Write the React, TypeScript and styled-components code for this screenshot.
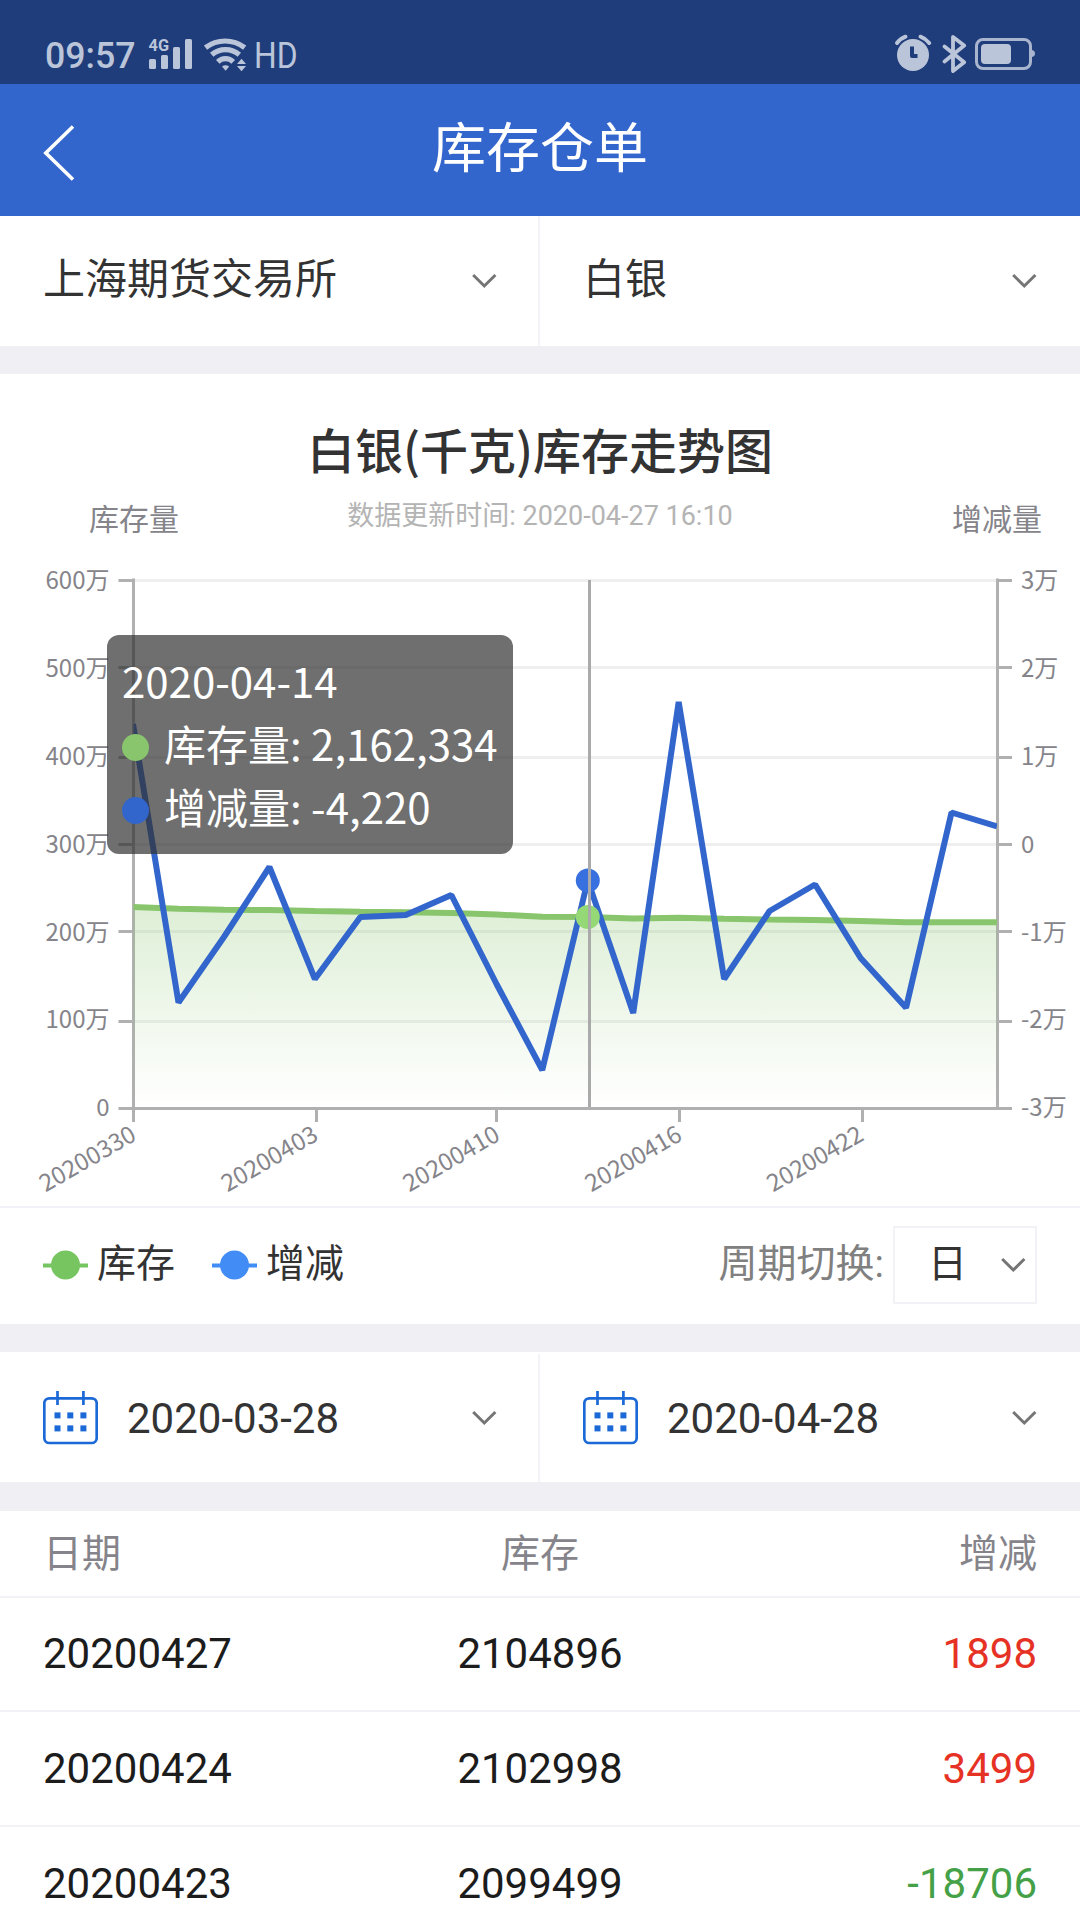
import React from "react";
import styled, { createGlobalStyle } from "styled-components";

const GlobalStyle = createGlobalStyle`
  html, body { margin: 0; padding: 0; background: #fff; }
  * { box-sizing: border-box; }
`;

const FONT = `Roboto, "Noto Sans CJK SC", sans-serif`;
const CJK = `"Noto Sans CJK SC", "Noto Sans", sans-serif`;

const Page = styled.div`
  width: 1080px;
  height: 1920px;
  overflow: hidden;
  display: flex;
  flex-direction: column;
  background: #f0eff4;
  font-family: ${FONT};
  color: #333;
  & > * { flex-shrink: 0; }
`;

const StatusBar = styled.div`
  height: 84px;
  padding: 26px 44px 0 45px;
  display: flex;
  justify-content: space-between;
  background: #1f3d7a;
  color: #bbc5da;
`;

const StatusGroup = styled.div`
  display: flex;
  height: 58px;
`;

const StatusText = styled.span<{ $squeeze: number; $weight: number }>`
  font-size: 37px;
  font-weight: ${(p) => p.$weight};
  line-height: 60px;
  white-space: nowrap;
  transform: scaleX(${(p) => p.$squeeze});
  transform-origin: left center;
`;

const ClockText = styled(StatusText)`
  width: 103px;
`;

const Header = styled.header`
  height: 132px;
  display: grid;
  grid-template-columns: 120px 1fr 120px;
  align-items: center;
  background: #3366cc;
  color: #fff;
`;

const BackButton = styled.button`
  display: flex;
  padding: 6px 0 0 43px;
  border: 0;
  background: none;
`;

const HeaderTitle = styled.h1`
  margin: 0;
  font-size: 54px;
  font-weight: 400;
  line-height: 80px;
  text-align: center;
`;

const PickerRow = styled.div`
  height: 130px;
  display: grid;
  grid-template-columns: 1fr 1fr;
  background: #fff;
`;

const Picker = styled.div<{ $divider?: boolean }>`
  display: flex;
  align-items: center;
  padding: 0 ${(p) => (p.$divider ? 41 : 43)}px 0 43px;
  border-right: ${(p) => (p.$divider ? "2px solid #f3f3f7" : "0")};
`;

const PickerLabel = styled.span<{ $lift?: number; $drop?: number; $indent?: number }>`
  flex: 1;
  padding: ${(p) => p.$drop ?? 0}px 0 ${(p) => p.$lift ?? 0}px ${(p) => p.$indent ?? 0}px;
  font-size: 42px;
  line-height: 60px;
`;

const ChartCard = styled.section`
  margin-top: 28px;
  height: 832px;
  position: relative;
  display: flex;
  flex-direction: column;
  background: #fff;
`;

const ChartTitle = styled.h2`
  margin: 0;
  padding-top: 42px;
  font-family: ${CJK};
  font-size: 48px;
  font-weight: 500;
  line-height: 64px;
  text-align: center;
`;

const ChartCaption = styled.div`
  display: grid;
  grid-template-columns: 1fr auto 1fr;
  height: 80px;
  padding: 13px 38px 0 89px;
`;

const AxisName = styled.span<{ $end?: boolean }>`
  padding-top: 7px;
  font-size: 30px;
  line-height: 40px;
  color: #85848a;
  text-align: ${(p) => (p.$end ? "right" : "left")};
`;

const UpdateTime = styled.span`
  margin-left: -51px;
  padding-top: 3px;
  font-size: 27px;
  line-height: 40px;
  color: #b4b4b4;
`;

const Plot = styled.svg`
  display: block;
  font-family: ${CJK};
  font-size: 24px;
`;

const Tooltip = styled.div`
  position: absolute;
  left: 107px;
  top: 261px;
  width: 406px;
  height: 219px;
  padding: 13px 15px;
  border-radius: 12px;
  background: rgba(50, 50, 50, 0.7);
  color: #fff;
  font-family: ${CJK};
  font-size: 42px;
  line-height: 63px;
  white-space: nowrap;
`;

const TooltipLine = styled.div`
  display: flex;
  align-items: center;
  height: 63px;
`;

const TooltipDot = styled.i<{ $color: string }>`
  width: 27px;
  height: 27px;
  margin: 9px 15px 0 0;
  border-radius: 50%;
  background: ${(p) => p.$color};
`;

const LegendBar = styled.div`
  height: 118px;
  padding: 0 43px 3px;
  display: flex;
  align-items: center;
  border-top: 2px solid #f2f2f8;
  background: #fff;
  font-size: 39px;
  line-height: 56px;
`;

const LegendItem = styled.div`
  display: flex;
  align-items: center;
  gap: 9px;
  margin-right: 37px;
`;

const LegendText = styled.span`
  padding-bottom: 1px;
`;

const PeriodLabel = styled.span`
  margin-left: auto;
  padding: 0 9px 1px 0;
  color: #808080;
`;

const PeriodSelect = styled.div`
  width: 144px;
  height: 78px;
  padding: 0 9px 0 33px;
  display: flex;
  align-items: center;
  justify-content: space-between;
  border: 2px solid #f1f1f6;
`;

const DateRow = styled(PickerRow)`
  margin-top: 28px;
  padding-top: 2px;
`;

const Table = styled.section`
  margin-top: 29px;
  background: #fff;
`;

const Row = styled.div<{ $head?: boolean }>`
  height: ${(p) => (p.$head ? 87 : 115)}px;
  padding: 0 43px;
  display: grid;
  grid-template-columns: 1fr 1fr 1fr;
  align-items: center;
  border-bottom: 2px solid #f2f2f7;
  font-size: ${(p) => (p.$head ? 39 : 42)}px;
  line-height: 60px;
  color: ${(p) => (p.$head ? "#85848a" : "#1c1c1c")};
  &:nth-child(2) { height: 114px; }
`;

const Cell = styled.span<{ $align?: string; $color?: string }>`
  text-align: ${(p) => p.$align ?? "left"};
  color: ${(p) => p.$color ?? "inherit"};
`;

const SignalIcon = () => (
  <svg width="106" height="58" viewBox="148 26 106 58" fill="#bbc5da">
    <text x="148.6" y="51" fontSize="16.5" fontWeight="700" fontFamily="Roboto, sans-serif" textLength="20.5" lengthAdjust="spacingAndGlyphs">4G</text>
    <rect x="149" y="59" width="7" height="10" rx="1.5" />
    <rect x="161" y="55" width="7" height="14" rx="1.5" />
    <rect x="173" y="47" width="7" height="22" rx="1.5" />
    <rect x="185" y="39" width="7" height="30" rx="1.5" />
    <g fill="none" stroke="#bbc5da" strokeWidth="5.2">
      <path d="M205.5 47.6A32.5 32.5 0 0 1 244.7 47.6" />
      <path d="M211.7 54.8A20.7 20.7 0 0 1 239.3 54.8" />
      <path d="M217.8 61.8A11 11 0 0 1 233.2 61.8" />
    </g>
    <path d="M222 66.5Q225.5 63.8 229.2 66.5L225.6 70.8Z" />
    <path d="M237 64L241.5 58.7L246 64ZM237 66L246 66L241.5 71.2Z" />
  </svg>
);

const DeviceIcons = () => (
  <svg width="142" height="58" viewBox="894 26 142 58">
    <circle cx="913" cy="55" r="16" fill="#bbc5da" />
    <path d="M912 46.5V56H917.5" fill="none" stroke="#1f3d7a" strokeWidth="4" strokeLinejoin="round" />
    <path d="M897 43Q900.5 38.5 905.5 36.7M920.5 36.7Q925.5 38.5 929.2 43" fill="none" stroke="#bbc5da" strokeWidth="4" strokeLinecap="round" />
    <path d="M944.5 46.5L964.2 62.2L953 71V37L964.2 45.5L944.5 61.5" fill="none" stroke="#bbc5da" strokeWidth="3.8" strokeLinejoin="round" strokeLinecap="round" />
    <rect x="976.5" y="39.5" width="54" height="29" rx="6.5" fill="none" stroke="#a9b5cf" strokeWidth="3" />
    <rect x="981" y="44" width="30" height="20" rx="4" fill="#bbc5da" />
    <path d="M1032 50Q1035 50.5 1035 53.5Q1035 56.5 1032 57Z" fill="#a9b5cf" />
  </svg>
);

const Chevron = () => (
  <svg width="26" height="16" viewBox="0 0 26 16">
    <path d="M2.2 2L13.3 13L24.4 2" fill="none" stroke="#757575" strokeWidth="3" />
  </svg>
);

const CalendarIcon = () => (
  <svg width="55" height="54" viewBox="43 1391 55 54" fill="none" stroke="#1b69d6" strokeWidth="2.7">
    <rect x="44.3" y="1398.3" width="52.4" height="44.7" rx="5" />
    <path d="M57.5 1391V1405M83.4 1391V1405" />
    <g fill="#1b69d6" stroke="none">
      {[1412.4, 1425.4].map((y) =>
        [54.5, 67.3, 80.4].map((x) => <rect key={`${x}-${y}`} x={x} y={y} width="6" height="6" />)
      )}
    </g>
  </svg>
);

const LegendMark = ({ color }: { color: string }) => (
  <svg width="45" height="30" viewBox="0 0 45 30" fill={color}>
    <rect y="13.5" width="45" height="4" />
    <circle cx="22.5" cy="15" r="14.5" />
  </svg>
);

/* Plot geometry, in page pixels */
const LEFT = 133;
const RIGHT = 997;
const STEP = (RIGHT - LEFT) / 19;
const gridY = [580.5, 667.5, 757.5, 844.5, 931.5, 1021.5, 1108.5];
const labelY = [589, 677, 765, 853, 941, 1028, 1116];
const leftLabels = ["600万", "500万", "400万", "300万", "200万", "100万", "0"];
const rightLabels = ["3万", "2万", "1万", "0", "-1万", "-2万", "-3万"];
const dateTicks = [
  { x: 133.5, label: "20200330" },
  { x: 316.5, label: "20200403" },
  { x: 496.5, label: "20200410" },
  { x: 679.5, label: "20200416" },
  { x: 862.5, label: "20200422" },
];
const changeY = [724, 1002.5, 937, 867, 979, 917, 915, 895, 984.5, 1070, 880.4, 1013, 702, 979, 911, 884.5, 958, 1007.8, 812.5, 826.5];
const stockY = [907, 908.7, 909.7, 910, 911, 911.7, 912.3, 913, 914.5, 916.7, 917, 918.5, 917.7, 918.7, 919.5, 920, 921, 922.3, 922.3, 922.3];
const toPath = (ys: number[]) => ys.map((y, i) => `${i ? "L" : "M"}${(LEFT + i * STEP).toFixed(2)} ${y}`).join("");

const TrendChart = () => (
  <Plot width="1080" height="646" viewBox="0 560 1080 646">
    <defs>
      <linearGradient id="area" x1="0" y1="907" x2="0" y2="1107" gradientUnits="userSpaceOnUse">
        <stop offset="0" stopColor="#88c56c" stopOpacity="0.28" />
        <stop offset="1" stopColor="#88c56c" stopOpacity="0" />
      </linearGradient>
      <clipPath id="plotClip">
        <rect x="133.5" y="574" width="863.5" height="540" />
      </clipPath>
    </defs>
    <g stroke="#efefef" strokeWidth="3">
      {gridY.map((y) => <path key={y} d={`M133.5 ${y}H997.5`} />)}
    </g>
    <g stroke="#b0b0b0" strokeWidth="3">
      <path d="M133.5 578.5V1110M997.5 578.5V1110M132 1108.5H999" />
      {gridY.map((y) => <path key={y} d={`M118.5 ${y}H133.5M997.5 ${y}H1012`} />)}
      {dateTicks.map((t) => <path key={t.x} d={`M${t.x} 1108.5V1122`} />)}
    </g>
    <g fill="#85848a">
      {leftLabels.map((t, i) => <text key={t} x="109.5" y={labelY[i]} textAnchor="end">{t}</text>)}
      {rightLabels.map((t, i) => <text key={t} x="1021" y={labelY[i]}>{t}</text>)}
      {dateTicks.map((t, i) => (
        <text key={t.label} textAnchor="end" transform={`translate(${133.3 + i * 181.9} 1131.5) rotate(-30)`} y="9">{t.label}</text>
      ))}
    </g>
    <g clipPath="url(#plotClip)" fill="none" strokeWidth="6" strokeLinejoin="bevel">
      <path d={`${toPath(stockY)}V1107H${LEFT}Z`} fill="url(#area)" />
      <path d={toPath(stockY)} stroke="#88c56c" />
      <path d={toPath(changeY)} stroke="#3366cc" />
    </g>
    <circle cx="587.8" cy="880.4" r="12" fill="#3870e0" />
    <circle cx="587.8" cy="917" r="12" fill="#95d876" />
    <path d="M589.5 580V1107" stroke="#aaa" strokeWidth="3" />
  </Plot>
);

const rows = [
  { date: "20200427", stock: "2104896", change: "1898" },
  { date: "20200424", stock: "2102998", change: "3499" },
  { date: "20200423", stock: "2099499", change: "-18706" },
];

export default function App() {
  return (
    <Page>
      <GlobalStyle />
      <StatusBar>
        <StatusGroup>
          <ClockText $squeeze={0.965} $weight={500}>09:57</ClockText>
          <SignalIcon />
          <StatusText $squeeze={0.86} $weight={400}>HD</StatusText>
        </StatusGroup>
        <DeviceIcons />
      </StatusBar>
      <Header>
        <BackButton aria-label="返回">
          <svg width="32" height="56" viewBox="44 125 32 56">
            <path d="M74 126.5L46.8 153L74 179.5" fill="none" stroke="#fff" strokeWidth="3.6" />
          </svg>
        </BackButton>
        <HeaderTitle>库存仓单</HeaderTitle>
      </Header>
      <PickerRow>
        <Picker $divider>
          <PickerLabel $lift={2}>上海期货交易所</PickerLabel>
          <Chevron />
        </Picker>
        <Picker>
          <PickerLabel $lift={2}>白银</PickerLabel>
          <Chevron />
        </Picker>
      </PickerRow>
      <ChartCard>
        <ChartTitle>白银(千克)库存走势图</ChartTitle>
        <ChartCaption>
          <AxisName>库存量</AxisName>
          <UpdateTime>数据更新时间: 2020-04-27 16:10</UpdateTime>
          <AxisName $end>增减量</AxisName>
        </ChartCaption>
        <TrendChart />
        <Tooltip>
          <TooltipLine>2020-04-14</TooltipLine>
          <TooltipLine><TooltipDot $color="#88c56c" />库存量: 2,162,334</TooltipLine>
          <TooltipLine><TooltipDot $color="#3366cc" />增减量: -4,220</TooltipLine>
        </Tooltip>
      </ChartCard>
      <LegendBar>
        <LegendItem><LegendMark color="#77c560" /><LegendText>库存</LegendText></LegendItem>
        <LegendItem><LegendMark color="#428cf6" /><LegendText>增减</LegendText></LegendItem>
        <PeriodLabel>周期切换:</PeriodLabel>
        <PeriodSelect><LegendText>日</LegendText><Chevron /></PeriodSelect>
      </LegendBar>
      <DateRow>
        <Picker $divider>
          <CalendarIcon />
          <PickerLabel $indent={29} $drop={2}>2020-03-28</PickerLabel>
          <Chevron />
        </Picker>
        <Picker>
          <CalendarIcon />
          <PickerLabel $indent={29} $drop={2}>2020-04-28</PickerLabel>
          <Chevron />
        </Picker>
      </DateRow>
      <Table>
        <Row $head>
          <Cell>日期</Cell>
          <Cell $align="center">库存</Cell>
          <Cell $align="right">增减</Cell>
        </Row>
        {rows.map((r) => (
          <Row key={r.date}>
            <Cell>{r.date}</Cell>
            <Cell $align="center">{r.stock}</Cell>
            <Cell $align="right" $color={r.change.startsWith("-") ? "#45a147" : "#e63224"}>{r.change}</Cell>
          </Row>
        ))}
      </Table>
    </Page>
  );
}
